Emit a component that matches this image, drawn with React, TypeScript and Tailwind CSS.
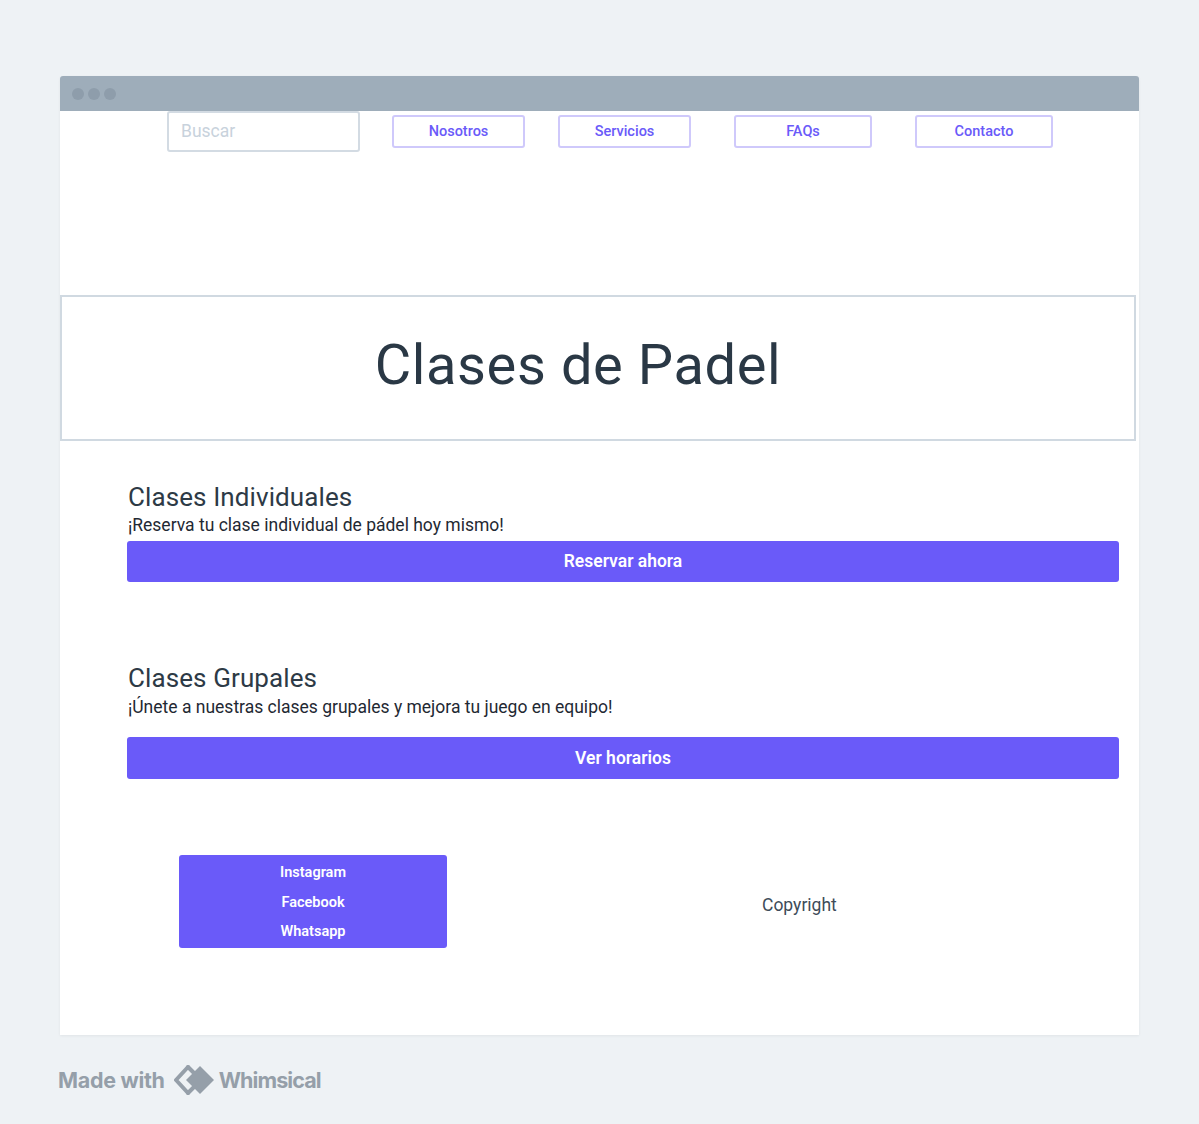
import React from 'react';

const navItems = [
  { label: 'Nosotros', w: 'w-[133px]', ml: 'ml-[32px]' },
  { label: 'Servicios', w: 'w-[133px]', ml: 'ml-[33px]' },
  { label: 'FAQs', w: 'w-[138px]', ml: 'ml-[43px]' },
  { label: 'Contacto', w: 'w-[138px]', ml: 'ml-[43px]' },
];

function WhimsicalMark() {
  return (
    <svg width="42" height="32" viewBox="0 0 42 32" fill="none">
      <path d="M14 3 L2 16 L14 29" stroke="#959fa9" strokeWidth="4" strokeLinejoin="round" strokeLinecap="round" />
      <path d="M14 3 L20 9" stroke="#959fa9" strokeWidth="4" strokeLinecap="round" />
      <path d="M14 29 L20 23" stroke="#959fa9" strokeWidth="4" strokeLinecap="round" />
      <path d="M26 2 L40 16 L26 30 L12 16 Z" fill="#959fa9" />
    </svg>
  );
}

function Section({
  title,
  text,
  action,
  textGap,
  buttonGap,
  buttonH,
}: {
  title: string;
  text: string;
  action: string;
  textGap: string;
  buttonGap: string;
  buttonH: string;
}) {
  return (
    <section className="pl-[67px] pr-[20px]">
      <h2 className="pl-[1px] text-[26px] leading-[30px] text-[#2d3a46] tracking-[0.1px]">{title}</h2>
      <p className={`${textGap} pl-[1px] text-[17.5px] leading-[20px] text-[#1f2933]`}>{text}</p>
      <button
        type="button"
        className={`${buttonGap} ${buttonH} w-full rounded-[3px] bg-[#6a5af9] text-[17.5px] font-semibold text-white`}
      >
        {action}
      </button>
    </section>
  );
}

export default function App() {
  return (
    <div
      className="min-h-[1124px] bg-[#eef2f5] pt-[76px] pl-[60px]"
      style={{ fontFamily: 'Roboto, "Noto Sans", sans-serif' }}
    >
      <div className="w-[1079px] overflow-hidden rounded-t-[3px] shadow-[0_1px_3px_rgba(0,0,0,0.06)]">
        <div className="flex h-[35px] items-center gap-[4px] bg-[#9eadba] pl-[12px]">
          <span className="h-[12px] w-[12px] rounded-full bg-[#8e9dab]" />
          <span className="h-[12px] w-[12px] rounded-full bg-[#8e9dab]" />
          <span className="h-[12px] w-[12px] rounded-full bg-[#8e9dab]" />
        </div>

        <div className="h-[924px] bg-white">
          <nav className="flex items-start pl-[107px]">
            <div className="flex h-[41px] w-[193px] items-center rounded-[3px] border-2 border-[#d3dbe3] px-[12px] text-[17.5px] text-[#c8d2dc]">
              Buscar
            </div>
            {navItems.map((item) => (
              <div
                key={item.label}
                className={`${item.ml} ${item.w} mt-[4px] flex h-[33px] items-center justify-center rounded-[3px] border-2 border-[#cfc9fb] text-[14.5px] font-medium text-[#6a5af9]`}
              >
                {item.label}
              </div>
            ))}
          </nav>

          <div className="mt-[143px] flex h-[146px] w-[1076px] items-center justify-center border-2 border-[#d0d9e1] pr-[40px]">
            <h1 className="-mt-[6px] text-[56px] leading-none text-[#2a3845] tracking-[0.6px]">Clases de Padel</h1>
          </div>

          <div className="mt-[41px]">
            <Section
              title="Clases Individuales"
              text="¡Reserva tu clase individual de pádel hoy mismo!"
              action="Reservar ahora"
              textGap="mt-[3px]"
              buttonGap="mt-[6px]"
              buttonH="h-[41px]"
            />
          </div>

          <div className="mt-[81px]">
            <Section
              title="Clases Grupales"
              text="¡Únete a nuestras clases grupales y mejora tu juego en equipo!"
              action="Ver horarios"
              textGap="mt-[4px]"
              buttonGap="mt-[20px]"
              buttonH="h-[42px]"
            />
          </div>

          <footer className="mt-[76px] flex items-center">
            <div className="ml-[119px] flex h-[93px] w-[268px] flex-col items-center justify-center rounded-[3px] bg-[#6a5af9] pt-[2px] text-[14.5px] font-semibold leading-[29.5px] text-white">
              <span>Instagram</span>
              <span>Facebook</span>
              <span>Whatsapp</span>
            </div>
            <div className="mt-[7px] ml-[315px] text-[17.5px] text-[#3e4c59]">Copyright</div>
          </footer>
        </div>
      </div>

      <div
        className="mt-[29px] flex items-center gap-[9px] text-[21.5px] font-bold text-[#959fa9]"
        style={{ fontFamily: 'Inter, sans-serif' }}
      >
        <span className="-ml-[2px] tracking-[-0.3px]">Made with</span>
        <WhimsicalMark />
        <span className="-ml-[6px] tracking-[-0.9px]">Whimsical</span>
      </div>
    </div>
  );
}
